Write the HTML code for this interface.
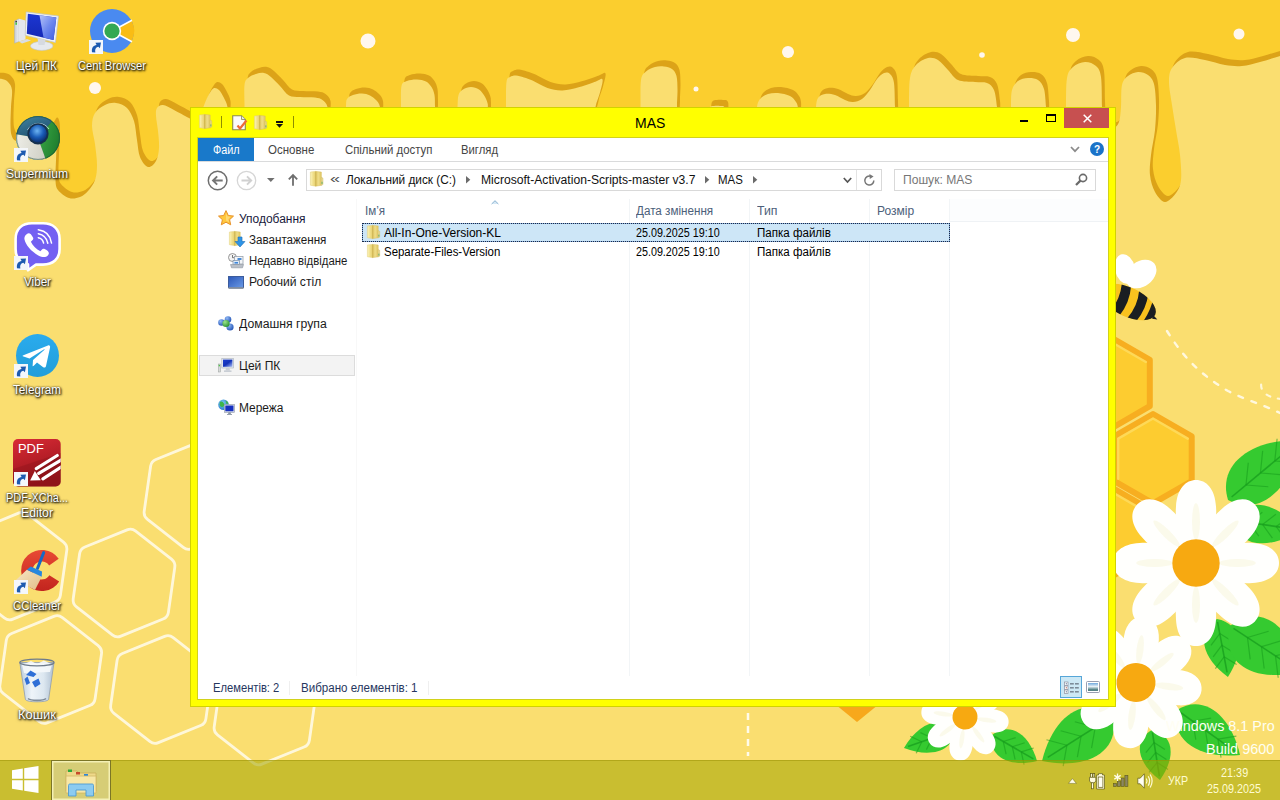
<!DOCTYPE html>
<html lang="uk"><head><meta charset="utf-8"><title>MAS</title><style>
*{margin:0;padding:0;box-sizing:border-box}
html,body{width:1280px;height:800px;overflow:hidden;background:#FADE70}
body{font-family:"Liberation Sans","DejaVu Sans",sans-serif;position:relative}
#wall{position:absolute;left:0;top:0}
.ic{position:absolute;overflow:visible}
.t{position:absolute;white-space:nowrap;transform-origin:0 50%;display:block}
.lbl{color:#fff !important;text-shadow:1px 1px 2px rgba(0,0,0,.95),0 1px 3px rgba(0,0,0,.7),0 0 2px rgba(0,0,0,.6)}
.bx{position:absolute}
#win{position:absolute;left:190px;top:107px;width:926px;height:600px;background:#FFFF00;box-shadow:inset 0 0 0 1px #D2D200}
#cont{position:absolute;left:198px;top:138px;width:910px;height:561px;background:#fff;box-shadow:0 0 0 1px #D2D21A}
#task{position:absolute;left:0;top:760px;width:1280px;height:40px;background:rgba(164,166,0,.57);border-top:1px solid rgba(150,140,0,.45)}
</style></head><body><svg id="wall" width="1280" height="800" viewBox="0 0 1280 800"><rect width="1280" height="800" fill="#FBCE2E"/><path d="M-8.0,79.0C-6.3,79.0 -0.7,78.5 2.0,79.0C4.7,79.5 6.3,80.2 8.0,82.0C9.7,83.8 11.5,85.8 12.0,90.0C12.5,94.2 11.2,101.2 11.0,107.0C10.8,112.8 10.4,120.3 10.5,125.0C10.6,129.7 10.6,132.3 11.5,135.0C12.4,137.7 13.2,140.2 16.0,141.0C18.8,141.8 23.7,140.7 28.0,139.5C32.3,138.3 38.3,135.8 42.0,134.0C45.7,132.2 48.0,130.8 50.0,129.0C52.0,127.2 52.9,123.7 54.0,123.5C55.1,123.3 56.0,125.2 56.5,128.0C57.0,130.8 57.1,134.7 57.0,140.0C56.9,145.3 56.2,153.3 56.0,160.0C55.8,166.7 55.2,175.0 55.5,180.0C55.8,185.0 55.8,187.0 58.0,190.0C60.2,193.0 65.3,196.8 69.0,198.0C72.7,199.2 76.8,198.2 80.0,197.0C83.2,195.8 85.5,193.8 88.0,191.0C90.5,188.2 93.5,184.3 95.0,180.0C96.5,175.7 97.0,171.0 97.0,165.0C97.0,159.0 95.8,150.5 95.0,144.0C94.2,137.5 92.0,131.2 92.0,126.0C92.0,120.8 92.8,116.5 95.0,113.0C97.2,109.5 101.5,106.7 105.0,105.0C108.5,103.3 112.3,102.5 116.0,103.0C119.7,103.5 124.0,105.0 127.0,108.0C130.0,111.0 132.3,115.7 134.0,121.0C135.7,126.3 136.0,134.0 137.0,140.0C138.0,146.0 138.2,152.5 140.0,157.0C141.8,161.5 145.3,166.3 148.0,167.0C150.7,167.7 154.2,164.2 156.0,161.0C157.8,157.8 158.7,153.0 159.0,148.0C159.3,143.0 158.5,136.3 158.0,131.0C157.5,125.7 156.2,119.8 156.0,116.0C155.8,112.2 155.8,109.8 157.0,108.0C158.2,106.2 160.2,104.7 163.0,105.0C165.8,105.3 169.7,107.8 174.0,110.0C178.3,112.2 185.0,116.0 189.0,118.0C193.0,120.0 195.7,123.7 198.0,122.0C200.3,120.3 201.5,112.0 203.0,108.0C204.5,104.0 205.7,100.8 207.0,98.0C208.3,95.2 209.8,92.7 211.0,91.0C212.2,89.3 213.2,88.2 214.5,88.0C215.8,87.8 217.5,88.5 219.0,90.0C220.5,91.5 222.1,94.2 223.5,97.0C224.9,99.8 226.8,102.8 227.5,107.0C228.2,111.2 226.6,118.8 228.0,122.0C229.4,125.2 233.3,126.3 236.0,126.0C238.7,125.7 242.6,123.2 244.0,120.0C245.4,116.8 244.4,112.8 244.5,107.0C244.6,101.2 243.9,89.8 244.5,85.0C245.1,80.2 246.1,79.8 248.0,78.0C249.9,76.2 253.3,74.8 256.0,74.0C258.7,73.2 261.5,72.5 264.0,73.0C266.5,73.5 268.3,74.8 271.0,77.0C273.7,79.2 277.0,82.9 280.0,86.0C283.0,89.1 285.7,93.7 289.0,95.5C292.3,97.3 295.7,96.7 300.0,97.0C304.3,97.3 311.2,97.0 315.0,97.5C318.8,98.0 320.4,98.4 322.5,100.0C324.6,101.6 326.6,103.3 327.5,107.0C328.4,110.7 326.4,118.8 328.0,122.0C329.6,125.2 334.0,126.3 337.0,126.0C340.0,125.7 344.5,123.2 346.0,120.0C347.5,116.8 345.8,110.5 346.0,107.0C346.2,103.5 345.8,101.0 347.0,99.0C348.2,97.0 350.5,95.9 353.0,95.0C355.5,94.1 359.2,93.4 362.0,93.5C364.8,93.6 367.7,94.4 370.0,95.5C372.3,96.6 374.3,98.1 376.0,100.0C377.7,101.9 379.2,103.3 380.0,107.0C380.8,110.7 379.2,118.8 381.0,122.0C382.8,125.2 387.7,126.3 391.0,126.0C394.3,125.7 399.3,123.2 401.0,120.0C402.7,116.8 400.9,112.7 401.0,107.0C401.1,101.3 400.5,90.3 401.5,86.0C402.5,81.7 404.4,82.1 407.0,81.0C409.6,79.9 413.8,79.4 417.0,79.5C420.2,79.6 423.6,80.2 426.0,81.5C428.4,82.8 430.1,84.8 431.5,87.0C432.9,89.2 433.9,91.7 434.5,95.0C435.1,98.3 434.8,102.5 435.0,107.0C435.2,111.5 434.2,118.8 436.0,122.0C437.8,125.2 442.5,126.3 446.0,126.0C449.5,125.7 455.1,123.2 457.0,120.0C458.9,116.8 457.2,111.2 457.5,107.0C457.8,102.8 457.6,97.9 458.5,95.0C459.4,92.1 460.9,90.8 463.0,89.5C465.1,88.2 468.3,87.0 471.0,87.0C473.7,87.0 476.8,88.0 479.0,89.5C481.2,91.0 483.1,93.8 484.5,96.0C485.9,98.2 486.9,101.0 487.5,103.0C488.1,105.0 487.8,104.8 488.0,108.0C488.2,111.2 487.5,119.0 489.0,122.0C490.5,125.0 494.2,126.3 497.0,126.0C499.8,125.7 504.5,123.2 506.0,120.0C507.5,116.8 505.9,113.3 506.0,107.0C506.1,100.7 505.8,87.0 506.5,82.0C507.2,77.0 508.4,78.1 510.0,77.0C511.6,75.9 513.7,75.4 516.0,75.5C518.3,75.6 521.2,76.7 524.0,77.5C526.8,78.3 528.6,78.8 532.5,80.5C536.4,82.2 542.5,86.3 547.5,88.0C552.5,89.7 557.2,90.7 562.5,90.5C567.8,90.3 573.9,88.5 579.5,87.0C585.1,85.5 592.2,82.8 596.0,81.5C599.8,80.2 601.8,77.7 602.5,79.5C603.2,81.3 601.2,87.9 600.0,92.5C598.8,97.1 596.3,102.1 595.5,107.0C594.7,111.9 591.2,118.8 595.0,122.0C598.8,125.2 610.5,126.3 618.0,126.0C625.5,125.7 636.2,123.2 640.0,120.0C643.8,116.8 640.3,113.7 640.5,107.0C640.7,100.3 640.1,85.9 641.0,80.0C641.9,74.1 643.7,73.7 646.0,71.5C648.3,69.3 652.0,67.8 655.0,67.0C658.0,66.2 661.2,66.2 664.0,66.5C666.8,66.8 669.9,67.4 672.0,69.0C674.1,70.6 675.6,72.5 676.5,76.0C677.4,79.5 677.4,84.8 677.5,90.0C677.6,95.2 676.9,101.7 677.0,107.0C677.1,112.3 675.5,118.8 678.0,122.0C680.5,125.2 687.3,126.3 692.0,126.0C696.7,125.7 703.2,123.0 706.0,120.0C708.8,117.0 707.7,110.3 709.0,108.0C710.3,105.7 712.2,106.3 714.0,106.0C715.8,105.7 718.2,105.7 720.0,106.0C721.8,106.3 723.8,105.3 725.0,108.0C726.2,110.7 724.0,119.0 727.0,122.0C730.0,125.0 738.0,126.3 743.0,126.0C748.0,125.7 754.7,123.2 757.0,120.0C759.3,116.8 756.5,110.5 757.0,107.0C757.5,103.5 758.2,101.2 760.0,99.0C761.8,96.8 765.0,95.0 768.0,94.0C771.0,93.0 774.3,92.7 778.0,93.0C781.7,93.3 787.0,94.5 790.0,96.0C793.0,97.5 794.7,100.0 796.0,102.0C797.3,104.0 797.5,104.7 798.0,108.0C798.5,111.3 797.3,119.0 799.0,122.0C800.7,125.0 805.2,126.3 808.0,126.0C810.8,125.7 814.7,123.2 816.0,120.0C817.3,116.8 815.7,110.7 816.0,107.0C816.3,103.3 816.5,100.2 818.0,98.0C819.5,95.8 822.2,94.5 825.0,94.0C827.8,93.5 831.7,94.0 835.0,95.0C838.3,96.0 842.0,98.8 845.0,100.0C848.0,101.2 850.2,102.2 853.0,102.0C855.8,101.8 859.2,101.0 862.0,99.0C864.8,97.0 867.5,93.3 870.0,90.0C872.5,86.7 874.7,81.8 877.0,79.0C879.3,76.2 881.8,73.8 884.0,73.0C886.2,72.2 888.3,72.3 890.0,74.0C891.7,75.7 893.2,77.5 894.0,83.0C894.8,88.5 894.7,100.5 895.0,107.0C895.3,113.5 894.7,118.8 896.0,122.0C897.3,125.2 900.8,126.3 903.0,126.0C905.2,125.7 908.0,123.2 909.0,120.0C910.0,116.8 908.8,114.0 909.0,107.0C909.2,100.0 908.8,85.0 910.0,78.0C911.2,71.0 913.0,68.3 916.0,65.0C919.0,61.7 924.3,58.8 928.0,58.0C931.7,57.2 934.7,58.0 938.0,60.0C941.3,62.0 944.7,66.7 948.0,70.0C951.3,73.3 953.5,78.0 958.0,80.0C962.5,82.0 970.2,81.5 975.0,82.0C979.8,82.5 983.8,81.7 987.0,83.0C990.2,84.3 992.3,86.0 994.0,90.0C995.7,94.0 996.3,101.7 997.0,107.0C997.7,112.3 996.8,118.8 998.0,122.0C999.2,125.2 1001.8,126.3 1004.0,126.0C1006.2,125.7 1009.8,123.2 1011.0,120.0C1012.2,116.8 1010.8,112.0 1011.0,107.0C1011.2,102.0 1010.8,94.3 1012.0,90.0C1013.2,85.7 1015.3,83.0 1018.0,81.0C1020.7,79.0 1024.7,78.2 1028.0,78.0C1031.3,77.8 1035.3,78.2 1038.0,80.0C1040.7,81.8 1042.7,84.5 1044.0,89.0C1045.3,93.5 1045.5,101.5 1046.0,107.0C1046.5,112.5 1045.3,118.8 1047.0,122.0C1048.7,125.2 1052.8,126.3 1056.0,126.0C1059.2,125.7 1064.3,123.2 1066.0,120.0C1067.7,116.8 1065.8,114.0 1066.0,107.0C1066.2,100.0 1065.8,84.7 1067.0,78.0C1068.2,71.3 1070.0,69.7 1073.0,67.0C1076.0,64.3 1081.2,62.2 1085.0,62.0C1088.8,61.8 1093.3,63.5 1096.0,66.0C1098.7,68.5 1100.0,70.2 1101.0,77.0C1102.0,83.8 1101.7,100.2 1102.0,107.0C1102.3,113.8 1102.0,114.7 1103.0,118.0C1104.0,121.3 1106.2,125.3 1108.0,127.0C1109.8,128.7 1112.2,128.8 1114.0,128.0C1115.8,127.2 1117.8,125.5 1119.0,122.0C1120.2,118.5 1120.5,113.2 1121.0,107.0C1121.5,100.8 1120.8,90.2 1122.0,85.0C1123.2,79.8 1125.3,78.2 1128.0,76.0C1130.7,73.8 1134.7,72.2 1138.0,72.0C1141.3,71.8 1145.3,73.0 1148.0,75.0C1150.7,77.0 1152.7,79.0 1154.0,84.0C1155.3,89.0 1155.8,97.3 1156.0,105.0C1156.2,112.7 1155.8,121.7 1155.0,130.0C1154.2,138.3 1151.8,147.5 1151.0,155.0C1150.2,162.5 1149.3,168.8 1150.0,175.0C1150.7,181.2 1152.5,187.5 1155.0,192.0C1157.5,196.5 1161.5,201.8 1165.0,202.0C1168.5,202.2 1173.3,196.7 1176.0,193.0C1178.7,189.3 1180.3,186.3 1181.0,180.0C1181.7,173.7 1180.8,163.3 1180.0,155.0C1179.2,146.7 1177.3,138.3 1176.0,130.0C1174.7,121.7 1173.2,113.0 1172.0,105.0C1170.8,97.0 1169.0,88.2 1169.0,82.0C1169.0,75.8 1169.3,72.0 1172.0,68.0C1174.7,64.0 1179.5,59.3 1185.0,58.0C1190.5,56.7 1198.3,58.8 1205.0,60.0C1211.7,61.2 1218.8,64.0 1225.0,65.0C1231.2,66.0 1236.2,66.5 1242.0,66.0C1247.8,65.5 1253.7,63.7 1260.0,62.0C1266.3,60.3 1274.2,57.7 1280.0,56.0C1285.8,54.3 1292.5,52.7 1295.0,52.0L1295,820L-8,820Z" fill="#DCA318" transform="translate(3,-6)"/><path d="M-8.0,79.0C-6.3,79.0 -0.7,78.5 2.0,79.0C4.7,79.5 6.3,80.2 8.0,82.0C9.7,83.8 11.5,85.8 12.0,90.0C12.5,94.2 11.2,101.2 11.0,107.0C10.8,112.8 10.4,120.3 10.5,125.0C10.6,129.7 10.6,132.3 11.5,135.0C12.4,137.7 13.2,140.2 16.0,141.0C18.8,141.8 23.7,140.7 28.0,139.5C32.3,138.3 38.3,135.8 42.0,134.0C45.7,132.2 48.0,130.8 50.0,129.0C52.0,127.2 52.9,123.7 54.0,123.5C55.1,123.3 56.0,125.2 56.5,128.0C57.0,130.8 57.1,134.7 57.0,140.0C56.9,145.3 56.2,153.3 56.0,160.0C55.8,166.7 55.2,175.0 55.5,180.0C55.8,185.0 55.8,187.0 58.0,190.0C60.2,193.0 65.3,196.8 69.0,198.0C72.7,199.2 76.8,198.2 80.0,197.0C83.2,195.8 85.5,193.8 88.0,191.0C90.5,188.2 93.5,184.3 95.0,180.0C96.5,175.7 97.0,171.0 97.0,165.0C97.0,159.0 95.8,150.5 95.0,144.0C94.2,137.5 92.0,131.2 92.0,126.0C92.0,120.8 92.8,116.5 95.0,113.0C97.2,109.5 101.5,106.7 105.0,105.0C108.5,103.3 112.3,102.5 116.0,103.0C119.7,103.5 124.0,105.0 127.0,108.0C130.0,111.0 132.3,115.7 134.0,121.0C135.7,126.3 136.0,134.0 137.0,140.0C138.0,146.0 138.2,152.5 140.0,157.0C141.8,161.5 145.3,166.3 148.0,167.0C150.7,167.7 154.2,164.2 156.0,161.0C157.8,157.8 158.7,153.0 159.0,148.0C159.3,143.0 158.5,136.3 158.0,131.0C157.5,125.7 156.2,119.8 156.0,116.0C155.8,112.2 155.8,109.8 157.0,108.0C158.2,106.2 160.2,104.7 163.0,105.0C165.8,105.3 169.7,107.8 174.0,110.0C178.3,112.2 185.0,116.0 189.0,118.0C193.0,120.0 195.7,123.7 198.0,122.0C200.3,120.3 201.5,112.0 203.0,108.0C204.5,104.0 205.7,100.8 207.0,98.0C208.3,95.2 209.8,92.7 211.0,91.0C212.2,89.3 213.2,88.2 214.5,88.0C215.8,87.8 217.5,88.5 219.0,90.0C220.5,91.5 222.1,94.2 223.5,97.0C224.9,99.8 226.8,102.8 227.5,107.0C228.2,111.2 226.6,118.8 228.0,122.0C229.4,125.2 233.3,126.3 236.0,126.0C238.7,125.7 242.6,123.2 244.0,120.0C245.4,116.8 244.4,112.8 244.5,107.0C244.6,101.2 243.9,89.8 244.5,85.0C245.1,80.2 246.1,79.8 248.0,78.0C249.9,76.2 253.3,74.8 256.0,74.0C258.7,73.2 261.5,72.5 264.0,73.0C266.5,73.5 268.3,74.8 271.0,77.0C273.7,79.2 277.0,82.9 280.0,86.0C283.0,89.1 285.7,93.7 289.0,95.5C292.3,97.3 295.7,96.7 300.0,97.0C304.3,97.3 311.2,97.0 315.0,97.5C318.8,98.0 320.4,98.4 322.5,100.0C324.6,101.6 326.6,103.3 327.5,107.0C328.4,110.7 326.4,118.8 328.0,122.0C329.6,125.2 334.0,126.3 337.0,126.0C340.0,125.7 344.5,123.2 346.0,120.0C347.5,116.8 345.8,110.5 346.0,107.0C346.2,103.5 345.8,101.0 347.0,99.0C348.2,97.0 350.5,95.9 353.0,95.0C355.5,94.1 359.2,93.4 362.0,93.5C364.8,93.6 367.7,94.4 370.0,95.5C372.3,96.6 374.3,98.1 376.0,100.0C377.7,101.9 379.2,103.3 380.0,107.0C380.8,110.7 379.2,118.8 381.0,122.0C382.8,125.2 387.7,126.3 391.0,126.0C394.3,125.7 399.3,123.2 401.0,120.0C402.7,116.8 400.9,112.7 401.0,107.0C401.1,101.3 400.5,90.3 401.5,86.0C402.5,81.7 404.4,82.1 407.0,81.0C409.6,79.9 413.8,79.4 417.0,79.5C420.2,79.6 423.6,80.2 426.0,81.5C428.4,82.8 430.1,84.8 431.5,87.0C432.9,89.2 433.9,91.7 434.5,95.0C435.1,98.3 434.8,102.5 435.0,107.0C435.2,111.5 434.2,118.8 436.0,122.0C437.8,125.2 442.5,126.3 446.0,126.0C449.5,125.7 455.1,123.2 457.0,120.0C458.9,116.8 457.2,111.2 457.5,107.0C457.8,102.8 457.6,97.9 458.5,95.0C459.4,92.1 460.9,90.8 463.0,89.5C465.1,88.2 468.3,87.0 471.0,87.0C473.7,87.0 476.8,88.0 479.0,89.5C481.2,91.0 483.1,93.8 484.5,96.0C485.9,98.2 486.9,101.0 487.5,103.0C488.1,105.0 487.8,104.8 488.0,108.0C488.2,111.2 487.5,119.0 489.0,122.0C490.5,125.0 494.2,126.3 497.0,126.0C499.8,125.7 504.5,123.2 506.0,120.0C507.5,116.8 505.9,113.3 506.0,107.0C506.1,100.7 505.8,87.0 506.5,82.0C507.2,77.0 508.4,78.1 510.0,77.0C511.6,75.9 513.7,75.4 516.0,75.5C518.3,75.6 521.2,76.7 524.0,77.5C526.8,78.3 528.6,78.8 532.5,80.5C536.4,82.2 542.5,86.3 547.5,88.0C552.5,89.7 557.2,90.7 562.5,90.5C567.8,90.3 573.9,88.5 579.5,87.0C585.1,85.5 592.2,82.8 596.0,81.5C599.8,80.2 601.8,77.7 602.5,79.5C603.2,81.3 601.2,87.9 600.0,92.5C598.8,97.1 596.3,102.1 595.5,107.0C594.7,111.9 591.2,118.8 595.0,122.0C598.8,125.2 610.5,126.3 618.0,126.0C625.5,125.7 636.2,123.2 640.0,120.0C643.8,116.8 640.3,113.7 640.5,107.0C640.7,100.3 640.1,85.9 641.0,80.0C641.9,74.1 643.7,73.7 646.0,71.5C648.3,69.3 652.0,67.8 655.0,67.0C658.0,66.2 661.2,66.2 664.0,66.5C666.8,66.8 669.9,67.4 672.0,69.0C674.1,70.6 675.6,72.5 676.5,76.0C677.4,79.5 677.4,84.8 677.5,90.0C677.6,95.2 676.9,101.7 677.0,107.0C677.1,112.3 675.5,118.8 678.0,122.0C680.5,125.2 687.3,126.3 692.0,126.0C696.7,125.7 703.2,123.0 706.0,120.0C708.8,117.0 707.7,110.3 709.0,108.0C710.3,105.7 712.2,106.3 714.0,106.0C715.8,105.7 718.2,105.7 720.0,106.0C721.8,106.3 723.8,105.3 725.0,108.0C726.2,110.7 724.0,119.0 727.0,122.0C730.0,125.0 738.0,126.3 743.0,126.0C748.0,125.7 754.7,123.2 757.0,120.0C759.3,116.8 756.5,110.5 757.0,107.0C757.5,103.5 758.2,101.2 760.0,99.0C761.8,96.8 765.0,95.0 768.0,94.0C771.0,93.0 774.3,92.7 778.0,93.0C781.7,93.3 787.0,94.5 790.0,96.0C793.0,97.5 794.7,100.0 796.0,102.0C797.3,104.0 797.5,104.7 798.0,108.0C798.5,111.3 797.3,119.0 799.0,122.0C800.7,125.0 805.2,126.3 808.0,126.0C810.8,125.7 814.7,123.2 816.0,120.0C817.3,116.8 815.7,110.7 816.0,107.0C816.3,103.3 816.5,100.2 818.0,98.0C819.5,95.8 822.2,94.5 825.0,94.0C827.8,93.5 831.7,94.0 835.0,95.0C838.3,96.0 842.0,98.8 845.0,100.0C848.0,101.2 850.2,102.2 853.0,102.0C855.8,101.8 859.2,101.0 862.0,99.0C864.8,97.0 867.5,93.3 870.0,90.0C872.5,86.7 874.7,81.8 877.0,79.0C879.3,76.2 881.8,73.8 884.0,73.0C886.2,72.2 888.3,72.3 890.0,74.0C891.7,75.7 893.2,77.5 894.0,83.0C894.8,88.5 894.7,100.5 895.0,107.0C895.3,113.5 894.7,118.8 896.0,122.0C897.3,125.2 900.8,126.3 903.0,126.0C905.2,125.7 908.0,123.2 909.0,120.0C910.0,116.8 908.8,114.0 909.0,107.0C909.2,100.0 908.8,85.0 910.0,78.0C911.2,71.0 913.0,68.3 916.0,65.0C919.0,61.7 924.3,58.8 928.0,58.0C931.7,57.2 934.7,58.0 938.0,60.0C941.3,62.0 944.7,66.7 948.0,70.0C951.3,73.3 953.5,78.0 958.0,80.0C962.5,82.0 970.2,81.5 975.0,82.0C979.8,82.5 983.8,81.7 987.0,83.0C990.2,84.3 992.3,86.0 994.0,90.0C995.7,94.0 996.3,101.7 997.0,107.0C997.7,112.3 996.8,118.8 998.0,122.0C999.2,125.2 1001.8,126.3 1004.0,126.0C1006.2,125.7 1009.8,123.2 1011.0,120.0C1012.2,116.8 1010.8,112.0 1011.0,107.0C1011.2,102.0 1010.8,94.3 1012.0,90.0C1013.2,85.7 1015.3,83.0 1018.0,81.0C1020.7,79.0 1024.7,78.2 1028.0,78.0C1031.3,77.8 1035.3,78.2 1038.0,80.0C1040.7,81.8 1042.7,84.5 1044.0,89.0C1045.3,93.5 1045.5,101.5 1046.0,107.0C1046.5,112.5 1045.3,118.8 1047.0,122.0C1048.7,125.2 1052.8,126.3 1056.0,126.0C1059.2,125.7 1064.3,123.2 1066.0,120.0C1067.7,116.8 1065.8,114.0 1066.0,107.0C1066.2,100.0 1065.8,84.7 1067.0,78.0C1068.2,71.3 1070.0,69.7 1073.0,67.0C1076.0,64.3 1081.2,62.2 1085.0,62.0C1088.8,61.8 1093.3,63.5 1096.0,66.0C1098.7,68.5 1100.0,70.2 1101.0,77.0C1102.0,83.8 1101.7,100.2 1102.0,107.0C1102.3,113.8 1102.0,114.7 1103.0,118.0C1104.0,121.3 1106.2,125.3 1108.0,127.0C1109.8,128.7 1112.2,128.8 1114.0,128.0C1115.8,127.2 1117.8,125.5 1119.0,122.0C1120.2,118.5 1120.5,113.2 1121.0,107.0C1121.5,100.8 1120.8,90.2 1122.0,85.0C1123.2,79.8 1125.3,78.2 1128.0,76.0C1130.7,73.8 1134.7,72.2 1138.0,72.0C1141.3,71.8 1145.3,73.0 1148.0,75.0C1150.7,77.0 1152.7,79.0 1154.0,84.0C1155.3,89.0 1155.8,97.3 1156.0,105.0C1156.2,112.7 1155.8,121.7 1155.0,130.0C1154.2,138.3 1151.8,147.5 1151.0,155.0C1150.2,162.5 1149.3,168.8 1150.0,175.0C1150.7,181.2 1152.5,187.5 1155.0,192.0C1157.5,196.5 1161.5,201.8 1165.0,202.0C1168.5,202.2 1173.3,196.7 1176.0,193.0C1178.7,189.3 1180.3,186.3 1181.0,180.0C1181.7,173.7 1180.8,163.3 1180.0,155.0C1179.2,146.7 1177.3,138.3 1176.0,130.0C1174.7,121.7 1173.2,113.0 1172.0,105.0C1170.8,97.0 1169.0,88.2 1169.0,82.0C1169.0,75.8 1169.3,72.0 1172.0,68.0C1174.7,64.0 1179.5,59.3 1185.0,58.0C1190.5,56.7 1198.3,58.8 1205.0,60.0C1211.7,61.2 1218.8,64.0 1225.0,65.0C1231.2,66.0 1236.2,66.5 1242.0,66.0C1247.8,65.5 1253.7,63.7 1260.0,62.0C1266.3,60.3 1274.2,57.7 1280.0,56.0C1285.8,54.3 1292.5,52.7 1295.0,52.0L1295,820L-8,820Z" fill="#FADE70"/><circle cx="95" cy="88" r="6" fill="#FFF7EE"/><circle cx="368" cy="41" r="7.5" fill="#FFF7EE"/><circle cx="696" cy="89" r="2.5" fill="#FFF7EE"/><circle cx="788" cy="52" r="6" fill="#FFF7EE"/><circle cx="982" cy="55" r="2.8" fill="#FFF7EE"/><circle cx="1073" cy="35" r="7" fill="#FFF7EE"/><circle cx="1239" cy="34" r="5.5" fill="#FFF7EE"/><g fill="none" stroke="#FFFDF2" stroke-opacity=".82" stroke-width="2.8" stroke-linejoin="round"><path d="M127.1,529.9Q131.7,528.0 135.7,531.1L171.5,559.1Q175.5,562.2 174.8,567.2L168.4,612.2Q167.7,617.2 163.1,619.0L120.9,636.1Q116.3,638.0 112.3,634.9L76.5,606.9Q72.5,603.8 73.2,598.8L79.6,553.8Q80.3,548.8 84.9,547.0Z"/><path d="M198.1,442.4Q202.7,440.5 206.7,443.6L242.5,471.6Q246.5,474.7 245.8,479.7L239.4,524.7Q238.7,529.7 234.1,531.5L191.9,548.6Q187.3,550.5 183.3,547.4L147.5,519.4Q143.5,516.3 144.2,511.3L150.6,466.3Q151.3,461.3 155.9,459.5Z"/><path d="M53.8,616.4Q58.4,614.5 62.4,617.6L98.2,645.6Q102.2,648.7 101.5,653.7L95.1,698.7Q94.4,703.7 89.8,705.5L47.6,722.6Q43.0,724.5 39.0,721.4L3.2,693.4Q-0.8,690.3 -0.1,685.3L6.3,640.3Q7.0,635.3 11.6,633.5Z"/><path d="M164.6,636.4Q169.2,634.5 173.2,637.6L209.0,665.6Q213.0,668.7 212.3,673.7L205.9,718.7Q205.2,723.7 200.6,725.5L158.4,742.6Q153.8,744.5 149.8,741.4L114.0,713.4Q110.0,710.3 110.7,705.3L117.1,660.3Q117.8,655.3 122.4,653.5Z"/><path d="M19.1,512.9Q23.7,511.0 27.7,514.1L63.5,542.1Q67.5,545.2 66.8,550.2L60.4,595.2Q59.7,600.2 55.1,602.0L12.9,619.1Q8.3,621.0 4.3,617.9L-31.5,589.9Q-35.5,586.8 -34.8,581.8L-28.4,536.8Q-27.7,531.8 -23.1,530.0Z"/><path d="M268.1,657.9Q272.7,656.0 276.7,659.1L312.5,687.1Q316.5,690.2 315.8,695.2L309.4,740.2Q308.7,745.2 304.1,747.0L261.9,764.1Q257.3,766.0 253.3,762.9L217.5,734.9Q213.5,731.8 214.2,726.8L220.6,681.8Q221.3,676.8 225.9,675.0Z"/></g><path d="M1109.5,336.5L1149.8,359.8L1149.8,406.2L1109.5,429.5L1069.2,406.2L1069.2,359.8Z" fill="#FDCC30" stroke="#F7AE20" stroke-width="6" stroke-linejoin="round"/><path d="M1073.1,404.0L1073.1,362.0L1109.5,341.0L1145.9,362.0" fill="none" stroke="#FEDC62" stroke-width="2.5" stroke-linejoin="round" stroke-linecap="round" opacity=".8"/><path d="M1153.0,414.0L1191.7,436.3L1191.7,481.1L1153.0,503.4L1114.3,481.1L1114.3,436.3Z" fill="#FDCC30" stroke="#F7AE20" stroke-width="6" stroke-linejoin="round"/><path d="M1118.2,478.8L1118.2,438.6L1153.0,418.5L1187.8,438.6" fill="none" stroke="#FEDC62" stroke-width="2.5" stroke-linejoin="round" stroke-linecap="round" opacity=".8"/><path d="M1111.0,487.0L1150.0,509.5L1150.0,554.5L1111.0,577.0L1072.0,554.5L1072.0,509.5Z" fill="#FDCC30" stroke="#F7AE20" stroke-width="6" stroke-linejoin="round"/><path d="M1075.9,552.2L1075.9,511.8L1111.0,491.5L1146.1,511.8" fill="none" stroke="#FEDC62" stroke-width="2.5" stroke-linejoin="round" stroke-linecap="round" opacity=".8"/><path d="M1069.0,412.0L1108.0,434.5L1108.0,479.5L1069.0,502.0L1030.0,479.5L1030.0,434.5Z" fill="#FDCC30" stroke="#F7AE20" stroke-width="6" stroke-linejoin="round"/><path d="M1033.9,477.2L1033.9,436.8L1069.0,416.5L1104.1,436.8" fill="none" stroke="#FEDC62" stroke-width="2.5" stroke-linejoin="round" stroke-linecap="round" opacity=".8"/><path d="M830,700L857,722L884,700Z" fill="#F7A81B"/><path d="M748,700V756" stroke="#FFFBEA" stroke-width="2.5" stroke-dasharray="7 6" fill="none"/><path d="M1167,331C1180,352 1196,372 1228,391C1245,400 1262,404 1282,414" stroke="#FFFBEA" stroke-width="2.4" stroke-dasharray="5 9" stroke-linecap="round" fill="none" opacity=".9"/><path d="M1282,399C1268,398 1258,392 1262,380" stroke="#FFFBEA" stroke-width="2.2" stroke-dasharray="4 8" stroke-linecap="round" fill="none" opacity=".85"/><ellipse cx="1125" cy="269" rx="10" ry="15" fill="#FFFFFF" transform="rotate(-12 1125 269)"/><defs><clipPath id="beeb"><ellipse cx="0" cy="0" rx="30" ry="14.5"/></clipPath></defs><g transform="translate(1128,302) rotate(25)"><g clip-path="url(#beeb)"><rect x="-32" y="-16" width="64" height="32" fill="#F9C21E"/><path d="M-14,-16Q-8,0 -12,16H-2Q2,0 -4,-16Z" fill="#1A1E22"/><path d="M5,-16Q11,0 6,16H15Q20,0 15,-16Z" fill="#1A1E22"/><path d="M21,-16Q25,0 21,16H34V-16Z" fill="#1A1E22"/></g><path d="M28,1L34,3.500L29,5Z" fill="#1A1E22"/></g><ellipse cx="1141" cy="274" rx="17" ry="12.500" fill="#FFFFFF" transform="rotate(-38 1141 274)"/><g transform="translate(1228,500) rotate(-39.8)"><path d="M0,0C14.1,-33.8 56.2,-32.5 93.7,0C56.2,32.5 14.1,33.8 0,0Z" fill="#35CA30"/><path d="M4.7,0L86.2,0" stroke="#169A1C" stroke-width="1.6" fill="none" opacity=".7"/><path d="M23.4,0L39.4,-15.6M23.4,0L39.4,15.6" stroke="#169A1C" stroke-width="1.2" fill="none" opacity=".55"/><path d="M42.2,0L58.1,-15.6M42.2,0L58.1,15.6" stroke="#169A1C" stroke-width="1.2" fill="none" opacity=".55"/><path d="M60.9,0L76.9,-15.6M60.9,0L76.9,15.6" stroke="#169A1C" stroke-width="1.2" fill="none" opacity=".55"/></g><g transform="translate(1232,520) rotate(8.4)"><path d="M0,0C10.3,-26.0 41.2,-25.0 68.7,0C41.2,25.0 10.3,26.0 0,0Z" fill="#35CA30"/><path d="M3.4,0L63.2,0" stroke="#169A1C" stroke-width="1.6" fill="none" opacity=".7"/><path d="M17.2,0L28.9,-12.0M17.2,0L28.9,12.0" stroke="#169A1C" stroke-width="1.2" fill="none" opacity=".55"/><path d="M30.9,0L42.6,-12.0M30.9,0L42.6,12.0" stroke="#169A1C" stroke-width="1.2" fill="none" opacity=".55"/><path d="M44.7,0L56.4,-12.0M44.7,0L56.4,12.0" stroke="#169A1C" stroke-width="1.2" fill="none" opacity=".55"/></g><g transform="translate(1217,619) rotate(79.3)"><path d="M0,0C8.9,-23.4 35.4,-22.5 59.0,0C35.4,22.5 8.9,23.4 0,0Z" fill="#35CA30"/><path d="M3.0,0L54.3,0" stroke="#169A1C" stroke-width="1.6" fill="none" opacity=".7"/><path d="M14.8,0L24.8,-10.8M14.8,0L24.8,10.8" stroke="#169A1C" stroke-width="1.2" fill="none" opacity=".55"/><path d="M26.6,0L36.6,-10.8M26.6,0L36.6,10.8" stroke="#169A1C" stroke-width="1.2" fill="none" opacity=".55"/><path d="M38.4,0L48.4,-10.8M38.4,0L48.4,10.8" stroke="#169A1C" stroke-width="1.2" fill="none" opacity=".55"/></g><g transform="translate(1230,626) rotate(33.3)"><path d="M0,0C12.6,-36.4 50.3,-35.0 83.8,0C50.3,35.0 12.6,36.4 0,0Z" fill="#35CA30"/><path d="M4.2,0L77.1,0" stroke="#169A1C" stroke-width="1.6" fill="none" opacity=".7"/><path d="M20.9,0L35.2,-16.8M20.9,0L35.2,16.8" stroke="#169A1C" stroke-width="1.2" fill="none" opacity=".55"/><path d="M37.7,0L51.9,-16.8M37.7,0L51.9,16.8" stroke="#169A1C" stroke-width="1.2" fill="none" opacity=".55"/><path d="M54.4,0L68.7,-16.8M54.4,0L68.7,16.8" stroke="#169A1C" stroke-width="1.2" fill="none" opacity=".55"/></g><g transform="translate(1177,710) rotate(35.5)"><path d="M0,0C11.6,-28.6 46.5,-27.5 77.4,0C46.5,27.5 11.6,28.6 0,0Z" fill="#35CA30"/><path d="M3.9,0L71.2,0" stroke="#169A1C" stroke-width="1.6" fill="none" opacity=".7"/><path d="M19.4,0L32.5,-13.2M19.4,0L32.5,13.2" stroke="#169A1C" stroke-width="1.2" fill="none" opacity=".55"/><path d="M34.8,0L48.0,-13.2M34.8,0L48.0,13.2" stroke="#169A1C" stroke-width="1.2" fill="none" opacity=".55"/><path d="M50.3,0L63.5,-13.2M50.3,0L63.5,13.2" stroke="#169A1C" stroke-width="1.2" fill="none" opacity=".55"/></g><g transform="translate(1152,730) rotate(80.9)"><path d="M0,0C7.6,-20.8 30.4,-20.0 50.6,0C30.4,20.0 7.6,20.8 0,0Z" fill="#35CA30"/><path d="M2.5,0L46.6,0" stroke="#169A1C" stroke-width="1.6" fill="none" opacity=".7"/><path d="M12.7,0L21.3,-9.6M12.7,0L21.3,9.6" stroke="#169A1C" stroke-width="1.2" fill="none" opacity=".55"/><path d="M22.8,0L31.4,-9.6M22.8,0L31.4,9.6" stroke="#169A1C" stroke-width="1.2" fill="none" opacity=".55"/><path d="M32.9,0L41.5,-9.6M32.9,0L41.5,9.6" stroke="#169A1C" stroke-width="1.2" fill="none" opacity=".55"/></g><g transform="translate(1113,716) rotate(147.6)"><path d="M0,0C12.6,-33.8 50.4,-32.5 84.1,0C50.4,32.5 12.6,33.8 0,0Z" fill="#35CA30"/><path d="M4.2,0L77.3,0" stroke="#169A1C" stroke-width="1.6" fill="none" opacity=".7"/><path d="M21.0,0L35.3,-15.6M21.0,0L35.3,15.6" stroke="#169A1C" stroke-width="1.2" fill="none" opacity=".55"/><path d="M37.8,0L52.1,-15.6M37.8,0L52.1,15.6" stroke="#169A1C" stroke-width="1.2" fill="none" opacity=".55"/><path d="M54.6,0L68.9,-15.6M54.6,0L68.9,15.6" stroke="#169A1C" stroke-width="1.2" fill="none" opacity=".55"/></g><g transform="translate(992,735) rotate(30.0)"><path d="M0,0C7.8,-20.8 31.2,-20.0 52.0,0C31.2,20.0 7.8,20.8 0,0Z" fill="#35CA30"/><path d="M2.6,0L47.8,0" stroke="#169A1C" stroke-width="1.6" fill="none" opacity=".7"/><path d="M13.0,0L21.8,-9.6M13.0,0L21.8,9.6" stroke="#169A1C" stroke-width="1.2" fill="none" opacity=".55"/><path d="M23.4,0L32.2,-9.6M23.4,0L32.2,9.6" stroke="#169A1C" stroke-width="1.2" fill="none" opacity=".55"/><path d="M33.8,0L42.6,-9.6M33.8,0L42.6,9.6" stroke="#169A1C" stroke-width="1.2" fill="none" opacity=".55"/></g><g transform="translate(955,730) rotate(160.6)"><path d="M0,0C8.1,-19.5 32.4,-18.8 54.1,0C32.4,18.8 8.1,19.5 0,0Z" fill="#35CA30"/><path d="M2.7,0L49.8,0" stroke="#169A1C" stroke-width="1.6" fill="none" opacity=".7"/><path d="M13.5,0L22.7,-9.0M13.5,0L22.7,9.0" stroke="#169A1C" stroke-width="1.2" fill="none" opacity=".55"/><path d="M24.3,0L33.5,-9.0M24.3,0L33.5,9.0" stroke="#169A1C" stroke-width="1.2" fill="none" opacity=".55"/><path d="M35.2,0L44.3,-9.0M35.2,0L44.3,9.0" stroke="#169A1C" stroke-width="1.2" fill="none" opacity=".55"/></g><g transform="translate(965,717) rotate(8)"><g transform="rotate(0.0)"><path d="M5.3,0C11.0,-8.6 19.8,-12.4 29.9,-11.5C39.6,-10.9 44.0,-5.8 44.0,0C44.0,5.8 39.6,10.9 29.9,11.5C19.8,12.4 11.0,8.6 5.3,0Z" fill="#FFFFFD"/><ellipse cx="22.0" cy="0" rx="9.7" ry="2.3" fill="#F7F6DC" opacity=".55"/></g><g transform="rotate(45.0)"><path d="M5.3,0C11.0,-8.6 19.8,-12.4 29.9,-11.5C39.6,-10.9 44.0,-5.8 44.0,0C44.0,5.8 39.6,10.9 29.9,11.5C19.8,12.4 11.0,8.6 5.3,0Z" fill="#FFFFFD"/><ellipse cx="22.0" cy="0" rx="9.7" ry="2.3" fill="#F7F6DC" opacity=".55"/></g><g transform="rotate(90.0)"><path d="M5.3,0C11.0,-8.6 19.8,-12.4 29.9,-11.5C39.6,-10.9 44.0,-5.8 44.0,0C44.0,5.8 39.6,10.9 29.9,11.5C19.8,12.4 11.0,8.6 5.3,0Z" fill="#FFFFFD"/><ellipse cx="22.0" cy="0" rx="9.7" ry="2.3" fill="#F7F6DC" opacity=".55"/></g><g transform="rotate(135.0)"><path d="M5.3,0C11.0,-8.6 19.8,-12.4 29.9,-11.5C39.6,-10.9 44.0,-5.8 44.0,0C44.0,5.8 39.6,10.9 29.9,11.5C19.8,12.4 11.0,8.6 5.3,0Z" fill="#FFFFFD"/><ellipse cx="22.0" cy="0" rx="9.7" ry="2.3" fill="#F7F6DC" opacity=".55"/></g><g transform="rotate(180.0)"><path d="M5.3,0C11.0,-8.6 19.8,-12.4 29.9,-11.5C39.6,-10.9 44.0,-5.8 44.0,0C44.0,5.8 39.6,10.9 29.9,11.5C19.8,12.4 11.0,8.6 5.3,0Z" fill="#FFFFFD"/><ellipse cx="22.0" cy="0" rx="9.7" ry="2.3" fill="#F7F6DC" opacity=".55"/></g><g transform="rotate(225.0)"><path d="M5.3,0C11.0,-8.6 19.8,-12.4 29.9,-11.5C39.6,-10.9 44.0,-5.8 44.0,0C44.0,5.8 39.6,10.9 29.9,11.5C19.8,12.4 11.0,8.6 5.3,0Z" fill="#FFFFFD"/><ellipse cx="22.0" cy="0" rx="9.7" ry="2.3" fill="#F7F6DC" opacity=".55"/></g><g transform="rotate(270.0)"><path d="M5.3,0C11.0,-8.6 19.8,-12.4 29.9,-11.5C39.6,-10.9 44.0,-5.8 44.0,0C44.0,5.8 39.6,10.9 29.9,11.5C19.8,12.4 11.0,8.6 5.3,0Z" fill="#FFFFFD"/><ellipse cx="22.0" cy="0" rx="9.7" ry="2.3" fill="#F7F6DC" opacity=".55"/></g><g transform="rotate(315.0)"><path d="M5.3,0C11.0,-8.6 19.8,-12.4 29.9,-11.5C39.6,-10.9 44.0,-5.8 44.0,0C44.0,5.8 39.6,10.9 29.9,11.5C19.8,12.4 11.0,8.6 5.3,0Z" fill="#FFFFFD"/><ellipse cx="22.0" cy="0" rx="9.7" ry="2.3" fill="#F7F6DC" opacity=".55"/></g><circle r="12.5" fill="#F7A911"/></g><g transform="translate(1136,682.5) rotate(7)"><g transform="rotate(0.0)"><path d="M7.9,0C16.5,-13.1 29.7,-18.9 44.9,-17.5C59.4,-16.6 66.0,-8.8 66.0,0C66.0,8.8 59.4,16.6 44.9,17.5C29.7,18.9 16.5,13.1 7.9,0Z" fill="#FFFFFD"/><ellipse cx="33.0" cy="0" rx="14.5" ry="3.5" fill="#F7F6DC" opacity=".55"/></g><g transform="rotate(45.0)"><path d="M7.9,0C16.5,-13.1 29.7,-18.9 44.9,-17.5C59.4,-16.6 66.0,-8.8 66.0,0C66.0,8.8 59.4,16.6 44.9,17.5C29.7,18.9 16.5,13.1 7.9,0Z" fill="#FFFFFD"/><ellipse cx="33.0" cy="0" rx="14.5" ry="3.5" fill="#F7F6DC" opacity=".55"/></g><g transform="rotate(90.0)"><path d="M7.9,0C16.5,-13.1 29.7,-18.9 44.9,-17.5C59.4,-16.6 66.0,-8.8 66.0,0C66.0,8.8 59.4,16.6 44.9,17.5C29.7,18.9 16.5,13.1 7.9,0Z" fill="#FFFFFD"/><ellipse cx="33.0" cy="0" rx="14.5" ry="3.5" fill="#F7F6DC" opacity=".55"/></g><g transform="rotate(135.0)"><path d="M7.9,0C16.5,-13.1 29.7,-18.9 44.9,-17.5C59.4,-16.6 66.0,-8.8 66.0,0C66.0,8.8 59.4,16.6 44.9,17.5C29.7,18.9 16.5,13.1 7.9,0Z" fill="#FFFFFD"/><ellipse cx="33.0" cy="0" rx="14.5" ry="3.5" fill="#F7F6DC" opacity=".55"/></g><g transform="rotate(180.0)"><path d="M7.9,0C16.5,-13.1 29.7,-18.9 44.9,-17.5C59.4,-16.6 66.0,-8.8 66.0,0C66.0,8.8 59.4,16.6 44.9,17.5C29.7,18.9 16.5,13.1 7.9,0Z" fill="#FFFFFD"/><ellipse cx="33.0" cy="0" rx="14.5" ry="3.5" fill="#F7F6DC" opacity=".55"/></g><g transform="rotate(225.0)"><path d="M7.9,0C16.5,-13.1 29.7,-18.9 44.9,-17.5C59.4,-16.6 66.0,-8.8 66.0,0C66.0,8.8 59.4,16.6 44.9,17.5C29.7,18.9 16.5,13.1 7.9,0Z" fill="#FFFFFD"/><ellipse cx="33.0" cy="0" rx="14.5" ry="3.5" fill="#F7F6DC" opacity=".55"/></g><g transform="rotate(270.0)"><path d="M7.9,0C16.5,-13.1 29.7,-18.9 44.9,-17.5C59.4,-16.6 66.0,-8.8 66.0,0C66.0,8.8 59.4,16.6 44.9,17.5C29.7,18.9 16.5,13.1 7.9,0Z" fill="#FFFFFD"/><ellipse cx="33.0" cy="0" rx="14.5" ry="3.5" fill="#F7F6DC" opacity=".55"/></g><g transform="rotate(315.0)"><path d="M7.9,0C16.5,-13.1 29.7,-18.9 44.9,-17.5C59.4,-16.6 66.0,-8.8 66.0,0C66.0,8.8 59.4,16.6 44.9,17.5C29.7,18.9 16.5,13.1 7.9,0Z" fill="#FFFFFD"/><ellipse cx="33.0" cy="0" rx="14.5" ry="3.5" fill="#F7F6DC" opacity=".55"/></g><circle r="19.5" fill="#F7A911"/></g><g transform="translate(1196,563) rotate(0)"><g transform="rotate(0.0)"><path d="M10.0,0C20.8,-15.0 37.4,-21.6 56.4,-20.0C74.7,-19.0 83.0,-10.0 83.0,0C83.0,10.0 74.7,19.0 56.4,20.0C37.4,21.6 20.8,15.0 10.0,0Z" fill="#FFFFFD"/><ellipse cx="41.5" cy="0" rx="18.3" ry="4.0" fill="#F7F6DC" opacity=".55"/></g><g transform="rotate(45.0)"><path d="M10.0,0C20.8,-15.0 37.4,-21.6 56.4,-20.0C74.7,-19.0 83.0,-10.0 83.0,0C83.0,10.0 74.7,19.0 56.4,20.0C37.4,21.6 20.8,15.0 10.0,0Z" fill="#FFFFFD"/><ellipse cx="41.5" cy="0" rx="18.3" ry="4.0" fill="#F7F6DC" opacity=".55"/></g><g transform="rotate(90.0)"><path d="M10.0,0C20.8,-15.0 37.4,-21.6 56.4,-20.0C74.7,-19.0 83.0,-10.0 83.0,0C83.0,10.0 74.7,19.0 56.4,20.0C37.4,21.6 20.8,15.0 10.0,0Z" fill="#FFFFFD"/><ellipse cx="41.5" cy="0" rx="18.3" ry="4.0" fill="#F7F6DC" opacity=".55"/></g><g transform="rotate(135.0)"><path d="M10.0,0C20.8,-15.0 37.4,-21.6 56.4,-20.0C74.7,-19.0 83.0,-10.0 83.0,0C83.0,10.0 74.7,19.0 56.4,20.0C37.4,21.6 20.8,15.0 10.0,0Z" fill="#FFFFFD"/><ellipse cx="41.5" cy="0" rx="18.3" ry="4.0" fill="#F7F6DC" opacity=".55"/></g><g transform="rotate(180.0)"><path d="M10.0,0C20.8,-15.0 37.4,-21.6 56.4,-20.0C74.7,-19.0 83.0,-10.0 83.0,0C83.0,10.0 74.7,19.0 56.4,20.0C37.4,21.6 20.8,15.0 10.0,0Z" fill="#FFFFFD"/><ellipse cx="41.5" cy="0" rx="18.3" ry="4.0" fill="#F7F6DC" opacity=".55"/></g><g transform="rotate(225.0)"><path d="M10.0,0C20.8,-15.0 37.4,-21.6 56.4,-20.0C74.7,-19.0 83.0,-10.0 83.0,0C83.0,10.0 74.7,19.0 56.4,20.0C37.4,21.6 20.8,15.0 10.0,0Z" fill="#FFFFFD"/><ellipse cx="41.5" cy="0" rx="18.3" ry="4.0" fill="#F7F6DC" opacity=".55"/></g><g transform="rotate(270.0)"><path d="M10.0,0C20.8,-15.0 37.4,-21.6 56.4,-20.0C74.7,-19.0 83.0,-10.0 83.0,0C83.0,10.0 74.7,19.0 56.4,20.0C37.4,21.6 20.8,15.0 10.0,0Z" fill="#FFFFFD"/><ellipse cx="41.5" cy="0" rx="18.3" ry="4.0" fill="#F7F6DC" opacity=".55"/></g><g transform="rotate(315.0)"><path d="M10.0,0C20.8,-15.0 37.4,-21.6 56.4,-20.0C74.7,-19.0 83.0,-10.0 83.0,0C83.0,10.0 74.7,19.0 56.4,20.0C37.4,21.6 20.8,15.0 10.0,0Z" fill="#FFFFFD"/><ellipse cx="41.5" cy="0" rx="18.3" ry="4.0" fill="#F7F6DC" opacity=".55"/></g><circle r="23.7" fill="#F7A911"/></g></svg><svg class="ic" style="left:13px;top:10px" width="46" height="42" viewBox="0 0 46 42" ><defs><linearGradient id="scr" x1="0" y1="0" x2="0" y2="1"><stop offset="0" stop-color="#1C36D2"/><stop offset="1" stop-color="#1428B4"/></linearGradient><linearGradient id="scr2" x1="0" y1="0" x2="1" y2="1"><stop offset="0" stop-color="#B4C2F8"/><stop offset=".5" stop-color="#6E88EE"/><stop offset="1" stop-color="#3E5CE0"/></linearGradient><linearGradient id="twr" x1="0" x2="1"><stop offset="0" stop-color="#C4CAD3"/><stop offset="1" stop-color="#F0F2F6"/></linearGradient></defs><path d="M1.500,11L6,8.800V31.500L1.500,33.200Z" fill="url(#twr)" stroke="#AAB1BB" stroke-width=".5"/><rect x="2.400" y="10.800" width="1.500" height="1.600" fill="#2B2F33"/><rect x="2.400" y="12.600" width="1.500" height="2.200" fill="#3CC23E"/><path d="M6,8.800L12.500,10.500V29.500L6,31.500Z" fill="#E4E7EC"/><path d="M6,31.500L14,29L18,30.500L9,33.500Z" fill="#D9DDE3"/><path d="M13.200,1.900L45.500,6L42.400,32.500L12.200,25.300Z" fill="#EEF1F5" stroke="#BCC4CF" stroke-width=".7"/><path d="M14.800,3.800L43.300,7.500L40.500,29.900L13.800,23.800Z" fill="url(#scr)"/><path d="M26.500,5.300L43.300,7.500L40.500,29.900L30.500,27.600Z" fill="url(#scr2)"/><ellipse cx="28.700" cy="35.900" rx="11.300" ry="4.500" fill="#E6E9EE" stroke="#BFC5CE" stroke-width=".6"/><path d="M24.500,28L32.500,30L31.500,35H25.500Z" fill="#D6DAE1"/></svg><span id="t0" class="t lbl" style="left:16px;top:57.0px;font-size:12px;line-height:18px;color:#000;transform:scaleX(0.9951);">Цей ПК</span><svg class="ic" style="left:90px;top:8.6px" width="44" height="44" viewBox="0 0 44 44" ><circle cx="22" cy="22" r="22" fill="#4A8AF0"/><path d="M22,22L41.5,11.5A22,22 0 0 1 41.5,32.5Z" fill="#F9BC15"/><path d="M22,22L42,11.2M22,22L42,32.8" stroke="#fff" stroke-width="1.6"/><circle cx="22" cy="22" r="9.2" fill="#fff"/><circle cx="22" cy="22" r="7.6" fill="#34A853"/></svg><svg class="ic" style="left:89px;top:40px" width="14" height="14" viewBox="0 0 14 14" ><rect width="14" height="14" fill="#F4F7FB"/><path d="M3,12.200C2.400,8 4.400,5.400 7.600,5.100L6.400,2.800L12,2.600L10.900,8.300L9.400,6.800C7,7.300 5.700,9 6.300,12.400Z" fill="#1E5BB0"/></svg><span id="t1" class="t lbl" style="left:78px;top:57.0px;font-size:12px;line-height:18px;color:#000;transform:scaleX(0.9353);">Cent Browser</span><svg class="ic" style="left:15.5px;top:115.5px" width="44" height="44" viewBox="0 0 44 44" ><defs><radialGradient id="ball" cx=".45" cy=".35" r=".65"><stop offset="0" stop-color="#6DB4F2"/><stop offset=".55" stop-color="#1A5DB8"/><stop offset="1" stop-color="#0B2F70"/></radialGradient><linearGradient id="smg" x1="0" y1="0" x2="1" y2="1"><stop offset="0" stop-color="#3FAE4A"/><stop offset="1" stop-color="#156F25"/></linearGradient><linearGradient id="smt" x1="0" y1="0" x2="0" y2="1"><stop offset="0" stop-color="#3A7A98"/><stop offset="1" stop-color="#1E4E6E"/></linearGradient><linearGradient id="smw" x1="0" y1="0" x2="1" y2="1"><stop offset="0" stop-color="#F0F0EA"/><stop offset="1" stop-color="#CFCFC4"/></linearGradient></defs><circle cx="22" cy="22" r="22" fill="#1F6B33"/><g transform="rotate(-20 22 22)"><path d="M22,22L3,11A22,22 0 0 1 41,11Z" fill="url(#smt)"/><path d="M22,22L41,11A22,22 0 0 1 22,44Z" fill="url(#smg)"/><path d="M22,22L22,44A22,22 0 0 1 3,11Z" fill="url(#smw)"/></g><circle cx="22" cy="22" r="21.400" fill="none" stroke="#1D4A3A" stroke-width="1" opacity=".55"/><path d="M11.500,14A12.500,12.500 0 0 1 33,13" fill="none" stroke="#CFE6EE" stroke-width="1" opacity=".8"/><circle cx="22" cy="17.800" r="10.600" fill="#15304E"/><circle cx="22" cy="17.600" r="8.800" fill="url(#ball)"/></svg><svg class="ic" style="left:14px;top:148px" width="14" height="14" viewBox="0 0 14 14" ><rect width="14" height="14" fill="#F4F7FB"/><path d="M3,12.200C2.400,8 4.400,5.400 7.600,5.100L6.400,2.800L12,2.600L10.900,8.300L9.400,6.800C7,7.300 5.700,9 6.300,12.400Z" fill="#1E5BB0"/></svg><span id="t2" class="t lbl" style="left:6px;top:165.0px;font-size:12px;line-height:18px;color:#000;transform:scaleX(1.0104);">Supermium</span><svg class="ic" style="left:14.5px;top:222px" width="46" height="49" viewBox="0 0 46 49" ><path d="M17,1.300H28C38,1.300 44.600,7 44.600,17V27C44.600,37 38,42.600 28,42.600H21L13,48.300V42.400C5.500,41 .6,36 .6,27V17C.6,7 7,1.300 17,1.300Z" fill="#7360F2" stroke="#fff" stroke-width="2.600" stroke-linejoin="round"/><g transform="translate(-3.200,.6) scale(1.060)"><path d="M14,11c2-2 4-1 6,3c1,2-1,3-2,4c2,4 5,7 9,9c1-1 2-3 4-2c4,2 5,4 3,6c-2,2-5,2-9,0C18,27 13,21 12,16C11.500,14 12.500,12 14,11Z" fill="#fff"/><path d="M25,10.500c5,1 8,4 9,9M25,14.300c3,.6 4.400,2 5,5M25,6.800c7,1 11.500,5.500 12.500,12.500" stroke="#fff" stroke-width="1.400" fill="none" stroke-linecap="round"/></g></svg><svg class="ic" style="left:14px;top:256px" width="14" height="14" viewBox="0 0 14 14" ><rect width="14" height="14" fill="#F4F7FB"/><path d="M3,12.200C2.400,8 4.400,5.400 7.600,5.100L6.400,2.800L12,2.600L10.900,8.300L9.400,6.800C7,7.300 5.700,9 6.300,12.400Z" fill="#1E5BB0"/></svg><span id="t3" class="t lbl" style="left:24px;top:273.0px;font-size:12px;line-height:18px;color:#000;transform:scaleX(0.9713);">Viber</span><svg class="ic" style="left:15.5px;top:333.5px" width="43" height="43" viewBox="0 0 43 43" ><defs><linearGradient id="tg" x1="0" y1="0" x2="0" y2="1"><stop offset="0" stop-color="#2AABEE"/><stop offset="1" stop-color="#229ED9"/></linearGradient></defs><circle cx="21.500" cy="21.500" r="21.500" fill="url(#tg)"/><path d="M8,21L32,11.500C33.500,11 34.500,12 34,13.800L30,32C29.600,33.600 28.500,34 27.200,33.200L21,28.600L18,31.500C17.600,31.900 17.300,32.200 16.600,32.200L17,26L28.500,15.800C29,15.300 28.400,15.100 27.700,15.500L13.500,24.500L7.500,22.600C6.200,22.200 6.200,21.600 8,21Z" fill="#fff"/></svg><svg class="ic" style="left:14px;top:364px" width="14" height="14" viewBox="0 0 14 14" ><rect width="14" height="14" fill="#F4F7FB"/><path d="M3,12.200C2.400,8 4.400,5.400 7.600,5.100L6.400,2.800L12,2.600L10.900,8.300L9.400,6.800C7,7.300 5.700,9 6.300,12.400Z" fill="#1E5BB0"/></svg><span id="t4" class="t lbl" style="left:13px;top:381.0px;font-size:12px;line-height:18px;color:#000;transform:scaleX(0.9725);">Telegram</span><svg class="ic" style="left:13.2px;top:439.1px" width="47.7" height="47.4" viewBox="0 0 47.7 47.4" ><defs><linearGradient id="pdfg" x1="0" y1="0" x2=".3" y2="1"><stop offset="0" stop-color="#D92B36"/><stop offset=".5" stop-color="#B81F28"/><stop offset="1" stop-color="#96161C"/></linearGradient><clipPath id="pdfc"><rect width="47.700" height="47.400" rx="5"/></clipPath></defs><rect width="47.700" height="47.400" rx="5" fill="url(#pdfg)"/><g clip-path="url(#pdfc)"><path d="M0,30L48,14V48H0Z" fill="#7F1015" opacity=".28"/><path d="M21.700,30.500L44.700,16.500L50,25L50,30L28.700,42Z" fill="#8E1218"/><path d="M23.300,29.600L44.300,16.500M25.700,34.400L49,20.500M29.900,39.900L49,27.400" stroke="#fff" stroke-width="3.100" stroke-linecap="round"/><path d="M17.100,41.600L21.900,32L27.800,41.300Z" fill="#fff"/></g></svg><span id="t5" class="t " style="left:17.6px;top:439.2px;font-size:13.4px;line-height:20px;color:#fff;transform:scaleX(0.9628);">PDF</span><svg class="ic" style="left:14px;top:472px" width="14" height="14" viewBox="0 0 14 14" ><rect width="14" height="14" fill="#F4F7FB"/><path d="M3,12.200C2.400,8 4.400,5.400 7.600,5.100L6.400,2.800L12,2.600L10.900,8.300L9.400,6.800C7,7.300 5.700,9 6.300,12.400Z" fill="#1E5BB0"/></svg><span id="t6" class="t lbl" style="left:6px;top:489.0px;font-size:12px;line-height:18px;color:#000;transform:scaleX(0.9116);">PDF-XCha...</span><span id="t7" class="t lbl" style="left:21px;top:504.0px;font-size:12px;line-height:18px;color:#000;transform:scaleX(1.0204);">Editor</span><svg class="ic" style="left:8px;top:543px" width="60" height="55" viewBox="0 0 60 55" ><defs><linearGradient id="ccg" x1="0" y1="0" x2="0" y2="1"><stop offset="0" stop-color="#E84A34"/><stop offset="1" stop-color="#C2241E"/></linearGradient><linearGradient id="ccb" x1="0" y1="0" x2="1" y2="1"><stop offset="0" stop-color="#F6E6C4"/><stop offset="1" stop-color="#E2BE86"/></linearGradient></defs><path d="M50.700,15.800A20.600,20.600 0 1 0 51.200,38.400L41.350,32.200A9,9 0 1 1 41.100,22.400Z" fill="url(#ccg)"/><path d="M18.900,26.800L33.700,33.700L27,47L8,37Z" fill="url(#ccb)"/><path d="M35.700,9.600L29.500,25.400" stroke="#1668C6" stroke-width="2.900" stroke-linecap="round"/><path d="M22.700,23.400L34,28.500L33.700,33.700L18.900,26.800Z" fill="#2787DE"/></svg><svg class="ic" style="left:14px;top:580px" width="14" height="14" viewBox="0 0 14 14" ><rect width="14" height="14" fill="#F4F7FB"/><path d="M3,12.200C2.400,8 4.400,5.400 7.600,5.100L6.400,2.800L12,2.600L10.900,8.300L9.400,6.800C7,7.300 5.700,9 6.300,12.400Z" fill="#1E5BB0"/></svg><span id="t8" class="t lbl" style="left:13px;top:597.0px;font-size:12px;line-height:18px;color:#000;transform:scaleX(0.9467);">CCleaner</span><svg class="ic" style="left:19.3px;top:657.5px" width="36" height="45" viewBox="0 0 36 45" ><defs><linearGradient id="rb" x1="0" x2="1"><stop offset="0" stop-color="#B9CBDB"/><stop offset=".35" stop-color="#EEF4F9"/><stop offset=".7" stop-color="#DCE7F0"/><stop offset="1" stop-color="#AFC0D2"/></linearGradient></defs><path d="M0.800,4.500L35,4.500L29.600,41.500C28.500,44.600 7.500,44.600 6.400,41.500Z" fill="url(#rb)" stroke="#8F9DAE" stroke-width=".8"/><path d="M3,7L12,3L18,6L25,2.500L33,6.500L31,14L5,15Z" fill="#F5F8FB" opacity=".9"/><ellipse cx="17.900" cy="4.500" rx="17.100" ry="3.300" fill="none" stroke="#6F7C8B" stroke-width="1.200"/><path d="M7,17l4.500,-4.500l6,3.500l-3,3zM5.500,21l3,-2.500l2.500,6.500l-3.500,2zM13,24l6.500,-3.500l2,5.500l-5.500,3.500z" fill="#2F6FD6"/><path d="M9,40.500C12,43 24,43 27,40.500" stroke="#7F8C9B" stroke-width="1.600" fill="none"/></svg><span id="t9" class="t lbl" style="left:18px;top:705.5px;font-size:12px;line-height:18px;color:#000;transform:scaleX(1.0780);">Кошик</span><div id="win"></div><svg class="ic" style="left:199.3px;top:114.3px" width="13" height="15" viewBox="0 0 13 14.5" preserveAspectRatio="none"><defs><linearGradient id="fg1a" x1="0" x2="1"><stop offset="0" stop-color="#FBF4BC"/><stop offset=".5" stop-color="#F1E08C"/><stop offset="1" stop-color="#E6CE6C"/></linearGradient><linearGradient id="fg1b" x1="0" x2="1"><stop offset="0" stop-color="#DDC35C"/><stop offset=".45" stop-color="#EFDD88"/><stop offset="1" stop-color="#E0C765"/></linearGradient></defs><path d="M0.4,1L5.6,0.4V14.1L0.4,13.2Z" fill="url(#fg1a)" stroke="#E2CC72" stroke-width=".5"/><path d="M5.6,0.4L11.2,1V13.3L5.6,14.1Z" fill="url(#fg1b)" stroke="#D8BE5C" stroke-width=".5"/><path d="M5.6,0.6V14" stroke="#C9AE4C" stroke-width=".6"/><path d="M11.2,5.8L12.7,6.6V12.6L11.2,13.3Z" fill="#F0E09A" stroke="#CDB85E" stroke-width=".5"/><rect x="11.3" y="10" width="1.1" height="2" fill="#6FB36A"/></svg><div class="bx" style="left:221px;top:116px;width:1px;height:12px;background:#8E8E00"></div><svg class="ic" style="left:232px;top:115px" width="15" height="16" viewBox="0 0 15 16" ><path d="M.7,.7H9.500L13.300,4.500V14.800H.7Z" fill="#FBFAFD" stroke="#8A8A4E" stroke-width="1.1"/><path d="M9.500,.7V4.500H13.300" fill="#E8E8F0" stroke="#8A8A4E" stroke-width=".8"/><path d="M5.500,10.500L8,13.500L14.500,5.500" fill="none" stroke="#EE6A3A" stroke-width="2.200"/></svg><svg class="ic" style="left:254px;top:115px" width="13" height="15" viewBox="0 0 13 14.5" preserveAspectRatio="none"><defs><linearGradient id="fg2a" x1="0" x2="1"><stop offset="0" stop-color="#FBF4BC"/><stop offset=".5" stop-color="#F1E08C"/><stop offset="1" stop-color="#E6CE6C"/></linearGradient><linearGradient id="fg2b" x1="0" x2="1"><stop offset="0" stop-color="#DDC35C"/><stop offset=".45" stop-color="#EFDD88"/><stop offset="1" stop-color="#E0C765"/></linearGradient></defs><path d="M0.4,1L5.6,0.4V14.1L0.4,13.2Z" fill="url(#fg2a)" stroke="#E2CC72" stroke-width=".5"/><path d="M5.6,0.4L11.2,1V13.3L5.6,14.1Z" fill="url(#fg2b)" stroke="#D8BE5C" stroke-width=".5"/><path d="M5.6,0.6V14" stroke="#C9AE4C" stroke-width=".6"/><path d="M11.2,5.8L12.7,6.6V12.6L11.2,13.3Z" fill="#F0E09A" stroke="#CDB85E" stroke-width=".5"/><rect x="11.3" y="10" width="1.1" height="2" fill="#6FB36A"/></svg><div class="bx" style="left:276px;top:121px;width:7px;height:2px;background:#111"></div><svg class="ic" style="left:276px;top:124px" width="7" height="4" viewBox="0 0 7 4" ><path d="M0,0H7L3.500,3.800Z" fill="#111"/></svg><div class="bx" style="left:293px;top:116px;width:1px;height:12px;background:#8E8E00"></div><span id="t10" class="t " style="left:634.5px;top:111.5px;font-size:15px;line-height:22px;color:#000;transform:scaleX(0.9319);">MAS</span><div class="bx" style="left:1020px;top:120px;width:8px;height:2px;background:#000"></div><div class="bx" style="left:1046px;top:114px;width:10px;height:8px;border:1px solid #000;border-top-width:2px"></div><div class="bx" style="left:1064px;top:108px;width:45px;height:20px;background:#C75050"></div><svg class="ic" style="left:1082.5px;top:113.5px" width="9" height="9" viewBox="0 0 9 9" ><path d="M.7,.7L8.300,8.300M8.300,.7L.7,8.300" stroke="#fff" stroke-width="1.500"/></svg><div id="cont"></div><div class="bx" style="left:198px;top:161px;width:910px;height:1px;background:#DADBDC"></div><div class="bx" style="left:198px;top:138px;width:56px;height:23px;background:#1979CA"></div><span id="t11" class="t " style="left:212.5px;top:140.6px;font-size:12px;line-height:18px;color:#fff;transform:scaleX(0.9046);">Файл</span><span id="t12" class="t " style="left:267.5px;top:140.6px;font-size:12px;line-height:18px;color:#444;transform:scaleX(0.9583);">Основне</span><span id="t13" class="t " style="left:344.5px;top:140.6px;font-size:12px;line-height:18px;color:#444;transform:scaleX(0.9462);">Спільний доступ</span><span id="t14" class="t " style="left:460.5px;top:140.6px;font-size:12px;line-height:18px;color:#444;transform:scaleX(0.9408);">Вигляд</span><svg class="ic" style="left:1070px;top:146px" width="10" height="7" viewBox="0 0 10 7" ><path d="M1,1L5,5.200L9,1" fill="none" stroke="#8A8A8A" stroke-width="1.700"/></svg><svg class="ic" style="left:1090px;top:142px" width="14" height="14" viewBox="0 0 14 14" ><circle cx="7" cy="7" r="7" fill="#1A73C9"/></svg><span id="t15" class="t " style="left:1094px;top:140.9px;font-size:11.5px;line-height:17px;color:#fff;transform:scaleX(0.8818);font-weight:700;">?</span><svg class="ic" style="left:207px;top:169.5px" width="21" height="21" viewBox="0 0 21 21" ><circle cx="10.600" cy="10.500" r="9.300" fill="none" stroke="#6E6E6E" stroke-width="1.500"/><path d="M15.700,10.500H6.500M10.200,6.300L6,10.500L10.200,14.700" fill="none" stroke="#757575" stroke-width="1.900"/></svg><svg class="ic" style="left:236px;top:169.5px" width="21" height="21" viewBox="0 0 21 21" ><circle cx="10.500" cy="10.500" r="9.200" fill="none" stroke="#D6D6D6" stroke-width="1.300"/><path d="M5.500,10.500H15M11,6.300L15.200,10.500L11,14.700" fill="none" stroke="#D0D0D0" stroke-width="1.900"/></svg><svg class="ic" style="left:266.5px;top:178px" width="8" height="4" viewBox="0 0 8 4" ><path d="M0,0H7.600L3.800,3.900Z" fill="#707070"/></svg><svg class="ic" style="left:288px;top:174px" width="10" height="12" viewBox="0 0 10 12" ><path d="M5,11.800V1.200M.8,5.300L5,1L9.200,5.300" fill="none" stroke="#6E6E6E" stroke-width="1.800"/></svg><div class="bx" style="left:306px;top:169px;width:576px;height:22px;border:1px solid #D9D9D9;background:#fff"></div><div class="bx" style="left:856px;top:170px;width:1px;height:20px;background:#E3E3E3"></div><svg class="ic" style="left:309.9px;top:171px" width="13.2" height="15.6" viewBox="0 0 13 14.5" preserveAspectRatio="none"><defs><linearGradient id="fg3a" x1="0" x2="1"><stop offset="0" stop-color="#FBF4BC"/><stop offset=".5" stop-color="#F1E08C"/><stop offset="1" stop-color="#E6CE6C"/></linearGradient><linearGradient id="fg3b" x1="0" x2="1"><stop offset="0" stop-color="#DDC35C"/><stop offset=".45" stop-color="#EFDD88"/><stop offset="1" stop-color="#E0C765"/></linearGradient></defs><path d="M0.4,1L5.6,0.4V14.1L0.4,13.2Z" fill="url(#fg3a)" stroke="#E2CC72" stroke-width=".5"/><path d="M5.6,0.4L11.2,1V13.3L5.6,14.1Z" fill="url(#fg3b)" stroke="#D8BE5C" stroke-width=".5"/><path d="M5.6,0.6V14" stroke="#C9AE4C" stroke-width=".6"/><path d="M11.2,5.8L12.7,6.6V12.6L11.2,13.3Z" fill="#F0E09A" stroke="#CDB85E" stroke-width=".5"/><rect x="11.3" y="10" width="1.1" height="2" fill="#6FB36A"/></svg><span id="t16" class="t " style="left:330px;top:170.0px;font-size:12px;line-height:18px;color:#555;transform:scaleX(1.4953);">«</span><span id="t17" class="t " style="left:346.2px;top:170.8px;font-size:12px;line-height:18px;color:#111;transform:scaleX(0.9853);">Локальний диск (C:)</span><svg class="ic" style="left:465.5px;top:176px" width="5" height="8" viewBox="0 0 5 8" ><path d="M0,0L4.300,3.800L0,7.600Z" fill="#6B6B6B"/></svg><span id="t18" class="t " style="left:480.5px;top:170.8px;font-size:12px;line-height:18px;color:#111;transform:scaleX(1.0115);">Microsoft-Activation-Scripts-master v3.7</span><svg class="ic" style="left:705px;top:176px" width="5" height="8" viewBox="0 0 5 8" ><path d="M0,0L4.300,3.800L0,7.600Z" fill="#6B6B6B"/></svg><span id="t19" class="t " style="left:718.2px;top:170.8px;font-size:12px;line-height:18px;color:#111;transform:scaleX(0.9533);">MAS</span><svg class="ic" style="left:752.5px;top:176px" width="5" height="8" viewBox="0 0 5 8" ><path d="M0,0L4.300,3.800L0,7.600Z" fill="#6B6B6B"/></svg><svg class="ic" style="left:843px;top:177px" width="9" height="7" viewBox="0 0 9 7" ><path d="M.8,1L4.500,5L8.200,1" fill="none" stroke="#555" stroke-width="1.700"/></svg><svg class="ic" style="left:862.5px;top:173.5px" width="13" height="13" viewBox="0 0 13 13" ><path d="M10.800,6.500A4.500,4.500 0 1 1 8,2.400" fill="none" stroke="#777" stroke-width="1.500"/><path d="M6.400,0L10.600,2.400L6.800,5Z" fill="#777"/></svg><div class="bx" style="left:894px;top:169px;width:202px;height:22px;border:1px solid #D9D9D9;background:#fff"></div><span id="t20" class="t " style="left:903.4px;top:170.8px;font-size:12px;line-height:18px;color:#767676;transform:scaleX(1.0079);">Пошук: MAS</span><svg class="ic" style="left:1075px;top:173px" width="13" height="13" viewBox="0 0 13 13" ><circle cx="8" cy="5" r="3.600" fill="none" stroke="#6A6A6A" stroke-width="1.600"/><path d="M5.400,7.600L1,12" stroke="#6A6A6A" stroke-width="2.200"/></svg><div class="bx" style="left:356px;top:199px;width:1px;height:477px;background:#F8F8F8"></div><svg class="ic" style="left:218px;top:210px" width="16" height="15" viewBox="0 0 16 15" ><path d="M8,.6L10.300,5.500L15.500,6.100L11.600,9.700L12.700,14.800L8,12.200L3.300,14.800L4.400,9.700L.5,6.100L5.700,5.500Z" fill="#FFC83D" stroke="#E8922A" stroke-width="1" stroke-linejoin="round"/><path d="M8,3L9.400,6.300L12.600,6.700L10.300,9L11,12.300L8,10.600Z" fill="#FFE08A" opacity=".7"/></svg><span id="t21" class="t " style="left:239px;top:210.0px;font-size:12px;line-height:18px;color:#191A3C;transform:scaleX(0.9985);">Уподобання</span><svg class="ic" style="left:228.5px;top:230.8px" width="13" height="15" viewBox="0 0 13 14.5" preserveAspectRatio="none"><defs><linearGradient id="fg4a" x1="0" x2="1"><stop offset="0" stop-color="#FBF4BC"/><stop offset=".5" stop-color="#F1E08C"/><stop offset="1" stop-color="#E6CE6C"/></linearGradient><linearGradient id="fg4b" x1="0" x2="1"><stop offset="0" stop-color="#DDC35C"/><stop offset=".45" stop-color="#EFDD88"/><stop offset="1" stop-color="#E0C765"/></linearGradient></defs><path d="M0.4,1L5.6,0.4V14.1L0.4,13.2Z" fill="url(#fg4a)" stroke="#E2CC72" stroke-width=".5"/><path d="M5.6,0.4L11.2,1V13.3L5.6,14.1Z" fill="url(#fg4b)" stroke="#D8BE5C" stroke-width=".5"/><path d="M5.6,0.6V14" stroke="#C9AE4C" stroke-width=".6"/><path d="M11.2,5.8L12.7,6.6V12.6L11.2,13.3Z" fill="#F0E09A" stroke="#CDB85E" stroke-width=".5"/><rect x="11.3" y="10" width="1.1" height="2" fill="#6FB36A"/></svg><svg class="ic" style="left:234.5px;top:237px" width="10" height="10.5" viewBox="0 0 10 10.5" ><path d="M3,0H7V4.500H10L5,10L0,4.500H3Z" fill="#2E94E6" stroke="#1F6FB8" stroke-width=".6"/></svg><span id="t22" class="t " style="left:249.4px;top:231.0px;font-size:12px;line-height:18px;color:#1B1B1B;transform:scaleX(0.9681);">Завантаження</span><svg class="ic" style="left:228px;top:252.5px" width="16" height="15" viewBox="0 0 16 15" ><circle cx="4.500" cy="4.500" r="4" fill="#F4F4F4" stroke="#8A8A8A" stroke-width=".9"/><path d="M4.500,2V4.700H6.600" stroke="#555" stroke-width=".8" fill="none"/><rect x="6.500" y="3.500" width="8.500" height="7.500" fill="#F3F5F8" stroke="#9AA2AD" stroke-width=".8"/><rect x="9.500" y="5" width="4" height="2" fill="#4A8BD6"/><rect x="5" y="7.500" width="6.500" height="4" fill="#DCE9F7" stroke="#7E8FA3" stroke-width=".7"/><rect x="6.500" y="9" width="3.500" height="1.600" fill="#3F86D8"/><path d="M2.500,11.500H15.500L14.500,14.800H3.500Z" fill="#B9BFC7" stroke="#8B939D" stroke-width=".6"/></svg><span id="t23" class="t " style="left:249.4px;top:252.0px;font-size:12px;line-height:18px;color:#1B1B1B;transform:scaleX(0.9477);">Недавно відвідане</span><svg class="ic" style="left:228px;top:275.5px" width="16" height="13.5" viewBox="0 0 16 13.5" ><defs><linearGradient id="dsk" x1="0" y1="0" x2="1" y2="1"><stop offset="0" stop-color="#2B57B8"/><stop offset="1" stop-color="#6A9AE6"/></linearGradient></defs><rect x=".5" y=".5" width="15" height="11" fill="url(#dsk)" stroke="#3C5C9C" stroke-width="1"/><rect x=".5" y="11.200" width="15" height="1.800" fill="#8E98A6"/></svg><span id="t24" class="t " style="left:249.4px;top:273.0px;font-size:12px;line-height:18px;color:#1B1B1B;transform:scaleX(1.0085);">Робочий стіл</span><svg class="ic" style="left:218px;top:316px" width="16" height="15" viewBox="0 0 16 15" ><defs><radialGradient id="hb" cx=".35" cy=".3" r=".8"><stop offset="0" stop-color="#8FB8F5"/><stop offset="1" stop-color="#1B4CB0"/></radialGradient><radialGradient id="hg" cx=".35" cy=".3" r=".8"><stop offset="0" stop-color="#9BE58C"/><stop offset="1" stop-color="#1F8A2A"/></radialGradient></defs><circle cx="10" cy="3.500" r="3.300" fill="url(#hb)"/><circle cx="3.500" cy="6.500" r="3.300" fill="url(#hb)"/><circle cx="12" cy="11" r="3.600" fill="url(#hb)"/><circle cx="8" cy="7.500" r="3.600" fill="url(#hg)"/></svg><span id="t25" class="t " style="left:239px;top:315.0px;font-size:12px;line-height:18px;color:#1B1B1B;transform:scaleX(1.0204);">Домашня група</span><div class="bx" style="left:199px;top:355px;width:156px;height:21px;background:#F3F3F3;border:1px solid #DCDCDC"></div><svg class="ic" style="left:218px;top:358px" width="16" height="15" viewBox="0 0 16 15" ><defs><linearGradient id="pcs" x1="0" y1="0" x2="1" y2="1"><stop offset="0" stop-color="#1D3FD0"/><stop offset=".5" stop-color="#1230B8"/><stop offset="1" stop-color="#A9BDF5"/></linearGradient></defs><rect x=".3" y="6" width="2.200" height="8" fill="#D7DAD9" stroke="#9A9F9E" stroke-width=".5"/><rect x=".7" y="6.800" width="1.300" height="1.500" fill="#4CC24A"/><rect x="3.800" y=".5" width="11.800" height="9.500" fill="#E4E8EE" stroke="#A9B1BD" stroke-width=".6"/><rect x="5" y="1.600" width="9.400" height="7.200" fill="url(#pcs)"/><path d="M8,10H11.500L12,12.500H7.500Z" fill="#C9CED6"/><rect x="6" y="12.500" width="7.500" height="1.300" fill="#BFC5CE"/></svg><span id="t26" class="t " style="left:239px;top:357.0px;font-size:12px;line-height:18px;color:#1B1B1B;transform:scaleX(1.0024);">Цей ПК</span><svg class="ic" style="left:218px;top:399px" width="17" height="16" viewBox="0 0 17 16" ><defs><radialGradient id="gl" cx=".4" cy=".35" r=".8"><stop offset="0" stop-color="#7FD1F5"/><stop offset="1" stop-color="#1668C4"/></radialGradient></defs><circle cx="5.500" cy="5.800" r="5.300" fill="url(#gl)"/><path d="M2,3c2-1 3,0 4,1.500c1,1.500 0,3-1.500,3.500c-1.500,.5-2.500-1-3-2.500Z M7.500,1.500c1.500,.5 2.500,1.500 3,3l-2,.5Z" fill="#3DB54A"/><rect x="6.300" y="5.500" width="10.200" height="7.800" fill="#E4E8EE" stroke="#8D97A6" stroke-width=".6"/><rect x="7.300" y="6.500" width="8.200" height="5.800" fill="#1630C0"/><path d="M10.500,13.300H12.500L13,15H10Z" fill="#8D97A6"/><rect x="9" y="15" width="5" height=".9" fill="#8D97A6"/></svg><span id="t27" class="t " style="left:239px;top:399.0px;font-size:12px;line-height:18px;color:#1B1B1B;transform:scaleX(0.9951);">Мережа</span><div class="bx" style="left:629px;top:199px;width:1px;height:477px;background:#F2F5F7"></div><div class="bx" style="left:749px;top:199px;width:1px;height:477px;background:#F2F5F7"></div><div class="bx" style="left:869px;top:199px;width:1px;height:477px;background:#F2F5F7"></div><div class="bx" style="left:949px;top:199px;width:1px;height:477px;background:#F2F5F7"></div><div class="bx" style="left:950px;top:199px;width:158px;height:23px;background:#FCFDFE;border-bottom:1px solid #EFF2F5"></div><svg class="ic" style="left:490.5px;top:200px" width="8" height="4.5" viewBox="0 0 8 4.5" ><path d="M.6,4L4,.7L7.400,4" fill="#D6E8F5" stroke="#7FAACB" stroke-width=".9"/></svg><span id="t28" class="t " style="left:364.7px;top:202.0px;font-size:12px;line-height:18px;color:#4C607A;transform:scaleX(0.9687);">Ім’я</span><span id="t29" class="t " style="left:636.2px;top:202.0px;font-size:12px;line-height:18px;color:#4C607A;transform:scaleX(0.9724);">Дата змінення</span><span id="t30" class="t " style="left:756.5px;top:202.0px;font-size:12px;line-height:18px;color:#4C607A;transform:scaleX(1.0242);">Тип</span><span id="t31" class="t " style="left:876.5px;top:202.0px;font-size:12px;line-height:18px;color:#4C607A;transform:scaleX(1.0024);">Розмір</span><div class="bx" style="left:362px;top:223px;width:588px;height:19px;background:#CDE6F7;border:1px solid #84ACDD;outline:1px dotted #1D2B44;outline-offset:-1px"></div><svg class="ic" style="left:366.8px;top:224.8px" width="13" height="14" viewBox="0 0 13 14.5" preserveAspectRatio="none"><defs><linearGradient id="fg5a" x1="0" x2="1"><stop offset="0" stop-color="#FBF4BC"/><stop offset=".5" stop-color="#F1E08C"/><stop offset="1" stop-color="#E6CE6C"/></linearGradient><linearGradient id="fg5b" x1="0" x2="1"><stop offset="0" stop-color="#DDC35C"/><stop offset=".45" stop-color="#EFDD88"/><stop offset="1" stop-color="#E0C765"/></linearGradient></defs><path d="M0.4,1L5.6,0.4V14.1L0.4,13.2Z" fill="url(#fg5a)" stroke="#E2CC72" stroke-width=".5"/><path d="M5.6,0.4L11.2,1V13.3L5.6,14.1Z" fill="url(#fg5b)" stroke="#D8BE5C" stroke-width=".5"/><path d="M5.6,0.6V14" stroke="#C9AE4C" stroke-width=".6"/><path d="M11.2,5.8L12.7,6.6V12.6L11.2,13.3Z" fill="#F0E09A" stroke="#CDB85E" stroke-width=".5"/><rect x="11.3" y="10" width="1.1" height="2" fill="#6FB36A"/></svg><span id="t32" class="t " style="left:384.2px;top:223.5px;font-size:12px;line-height:18px;color:#000;transform:scaleX(1.0024);">All-In-One-Version-KL</span><span id="t33" class="t " style="left:636.2px;top:223.5px;font-size:12px;line-height:18px;color:#000;transform:scaleX(0.8949);">25.09.2025 19:10</span><span id="t34" class="t " style="left:756.5px;top:223.5px;font-size:12px;line-height:18px;color:#000;transform:scaleX(0.9631);">Папка файлів</span><svg class="ic" style="left:366.8px;top:243.8px" width="13" height="14" viewBox="0 0 13 14.5" preserveAspectRatio="none"><defs><linearGradient id="fg6a" x1="0" x2="1"><stop offset="0" stop-color="#FBF4BC"/><stop offset=".5" stop-color="#F1E08C"/><stop offset="1" stop-color="#E6CE6C"/></linearGradient><linearGradient id="fg6b" x1="0" x2="1"><stop offset="0" stop-color="#DDC35C"/><stop offset=".45" stop-color="#EFDD88"/><stop offset="1" stop-color="#E0C765"/></linearGradient></defs><path d="M0.4,1L5.6,0.4V14.1L0.4,13.2Z" fill="url(#fg6a)" stroke="#E2CC72" stroke-width=".5"/><path d="M5.6,0.4L11.2,1V13.3L5.6,14.1Z" fill="url(#fg6b)" stroke="#D8BE5C" stroke-width=".5"/><path d="M5.6,0.6V14" stroke="#C9AE4C" stroke-width=".6"/><path d="M11.2,5.8L12.7,6.6V12.6L11.2,13.3Z" fill="#F0E09A" stroke="#CDB85E" stroke-width=".5"/><rect x="11.3" y="10" width="1.1" height="2" fill="#6FB36A"/></svg><span id="t35" class="t " style="left:384.2px;top:243.0px;font-size:12px;line-height:18px;color:#000;transform:scaleX(0.9528);">Separate-Files-Version</span><span id="t36" class="t " style="left:636.2px;top:243.0px;font-size:12px;line-height:18px;color:#000;transform:scaleX(0.8949);">25.09.2025 19:10</span><span id="t37" class="t " style="left:756.5px;top:243.0px;font-size:12px;line-height:18px;color:#000;transform:scaleX(0.9631);">Папка файлів</span><span id="t38" class="t " style="left:212.5px;top:678.6px;font-size:12px;line-height:18px;color:#26365E;transform:scaleX(0.9324);">Елементів: 2</span><span id="t39" class="t " style="left:300.5px;top:678.6px;font-size:12px;line-height:18px;color:#26365E;transform:scaleX(0.9632);">Вибрано елементів: 1</span><div class="bx" style="left:289px;top:681px;width:1px;height:14px;background:#EFEFEF"></div><div class="bx" style="left:428px;top:681px;width:1px;height:14px;background:#EFEFEF"></div><div class="bx" style="left:1060px;top:676px;width:22px;height:22px;background:#CCE8F5;border:1px solid #56A6D8"></div><svg class="ic" style="left:1060px;top:676.7px" width="22" height="22" viewBox="0 0 22 22" ><rect x="4.500" y="5" width="3.500" height="3.500" fill="#fff" stroke="#8A8FA0" stroke-width=".7"/><rect x="5.800" y="6.3" width="1" height="1" fill="#35507A"/><rect x="10" y="6.3" width="3.800" height="1.100" fill="#5A6472"/><rect x="15" y="6.3" width="3.800" height="1.100" fill="#5A6472"/><rect x="4.500" y="9" width="3.500" height="3.500" fill="#fff" stroke="#8A8FA0" stroke-width=".7"/><rect x="5.800" y="10.3" width="1" height="1" fill="#B0402A"/><rect x="10" y="10.3" width="3.800" height="1.100" fill="#5A6472"/><rect x="15" y="10.3" width="3.800" height="1.100" fill="#5A6472"/><rect x="4.500" y="13" width="3.500" height="3.500" fill="#fff" stroke="#8A8FA0" stroke-width=".7"/><rect x="5.800" y="14.3" width="1" height="1" fill="#35507A"/><rect x="10" y="14.3" width="3.800" height="1.100" fill="#5A6472"/><rect x="15" y="14.3" width="3.800" height="1.100" fill="#5A6472"/></svg><svg class="ic" style="left:1086px;top:681px" width="14" height="12" viewBox="0 0 14 12" ><defs><linearGradient id="pic" x1="0" y1="0" x2="0" y2="1"><stop offset="0" stop-color="#6FA8DC"/><stop offset=".45" stop-color="#E6F0F6"/><stop offset="1" stop-color="#1E5A5E"/></linearGradient></defs><rect x=".5" y=".5" width="13" height="11" rx="1" fill="#fff" stroke="#8D93A8" stroke-width=".9"/><rect x="2" y="2" width="10" height="7.800" fill="url(#pic)"/></svg><span id="t40" class="t " style="left:1165.5px;top:715.5px;font-size:14px;line-height:21px;color:#FFFEF2;transform:scaleX(1.0271);">Windows 8.1 Pro</span><span id="t41" class="t " style="left:1205.9px;top:739.2px;font-size:14px;line-height:21px;color:#FFFEF2;transform:scaleX(1.0322);">Build 9600</span><div id="task"></div><svg class="ic" style="left:12px;top:766px" width="27" height="27" viewBox="0 0 27 27" ><path d="M0,4.200L10.800,2.500V12.800H0ZM12.200,2.300L26.500,0V12.800H12.200ZM0,14.200H10.800V24.500L0,22.800ZM12.200,14.200H26.500V27L12.200,24.700Z" fill="#fff"/></svg><div class="bx" style="left:51px;top:760px;width:60px;height:41px;background:#D6CD76;border:1px solid #7C7626;box-shadow:inset 0 0 0 1.500px #F4F0B4"></div><svg class="ic" style="left:65px;top:766.5px" width="33" height="30" viewBox="0 0 33 30" ><path d="M1,4H12L14,6H31V24H1Z" fill="#EFD98A" stroke="#C9AE5C" stroke-width=".8"/><rect x="3" y="2.500" width="4" height="2.500" fill="#2EAA3A"/><rect x="11" y="5" width="4" height="2.500" fill="#C84A2A"/><rect x="19" y="7" width="4" height="2.500" fill="#2E86D8"/><path d="M1,9H31V26H1Z" fill="#F7E7A6" stroke="#D2B765" stroke-width=".8"/><path d="M5,17H27C28,17 28.500,17.500 28.500,18.500V29H21V23H11V29H3.500V18.500C3.500,17.500 4,17 5,17Z" fill="#8CCBF0" stroke="#4E9BD0" stroke-width=".9"/></svg><svg class="ic" style="left:1068px;top:778px" width="9" height="6" viewBox="0 0 9 6" ><path d="M.4,5.400L4.400,.6L8.400,5.400Z" fill="#FFFDEA" stroke="#6A6418" stroke-width=".5"/></svg><svg class="ic" style="left:1089px;top:772.5px" width="17" height="16.5" viewBox="0 0 17 16.5" ><g stroke="#5F5A14" stroke-width=".7" fill="#FFFBDD"><rect x="1.600" y=".5" width="1.700" height="4"/><rect x="4" y=".5" width="1.700" height="4"/><path d="M.5,4.300H6.800V8L5,10H2.300L.5,8Z"/><rect x="2.600" y="9.800" width="2" height="6"/><path d="M7.600,2H9.500V.6H13.500V2H15.500V16H7.600Z"/><rect x="9.200" y="4" width="4.700" height="10.300" fill="#FFFEF2"/></g></svg><svg class="ic" style="left:1113px;top:773px" width="16" height="16" viewBox="0 0 16 16" ><g fill="#8C8760" stroke="#5F5A14" stroke-width=".6"><rect x=".5" y="10.500" width="3" height="3"/><rect x="4.300" y="8" width="3" height="5.500"/><rect x="8.100" y="5" width="3" height="8.500"/><rect x="11.900" y="2.300" width="3" height="11.200"/></g><path d="M4.500,.5V8M1.300,2.400L7.700,6.100M1.300,6.100L7.700,2.400" stroke="#FFFDEA" stroke-width="1.300"/></svg><svg class="ic" style="left:1137px;top:773px" width="16" height="16" viewBox="0 0 16 16" ><path d="M.8,5.200H3.200L7.300,.8V15.200L3.200,10.800H.8Z" fill="#FFFEF2" stroke="#5F5A14" stroke-width=".7"/><path d="M9.300,5.500Q10.800,8 9.300,10.500M11.200,3.300Q14,8 11.200,12.700M13.200,1.500Q17,8 13.200,14.500" fill="none" stroke="#FFFBD5" stroke-width="1.200"/></svg><span id="t42" class="t " style="left:1168px;top:771.7px;font-size:12px;line-height:18px;color:#FFFCD0;transform:scaleX(0.8884);">УКР</span><span id="t43" class="t " style="left:1220.9px;top:763.7px;font-size:12px;line-height:18px;color:#FFFCD0;transform:scaleX(0.9057);">21:39</span><span id="t44" class="t " style="left:1206.9px;top:780.4px;font-size:12px;line-height:18px;color:#FFFCD0;transform:scaleX(0.8974);">25.09.2025</span></body></html>
